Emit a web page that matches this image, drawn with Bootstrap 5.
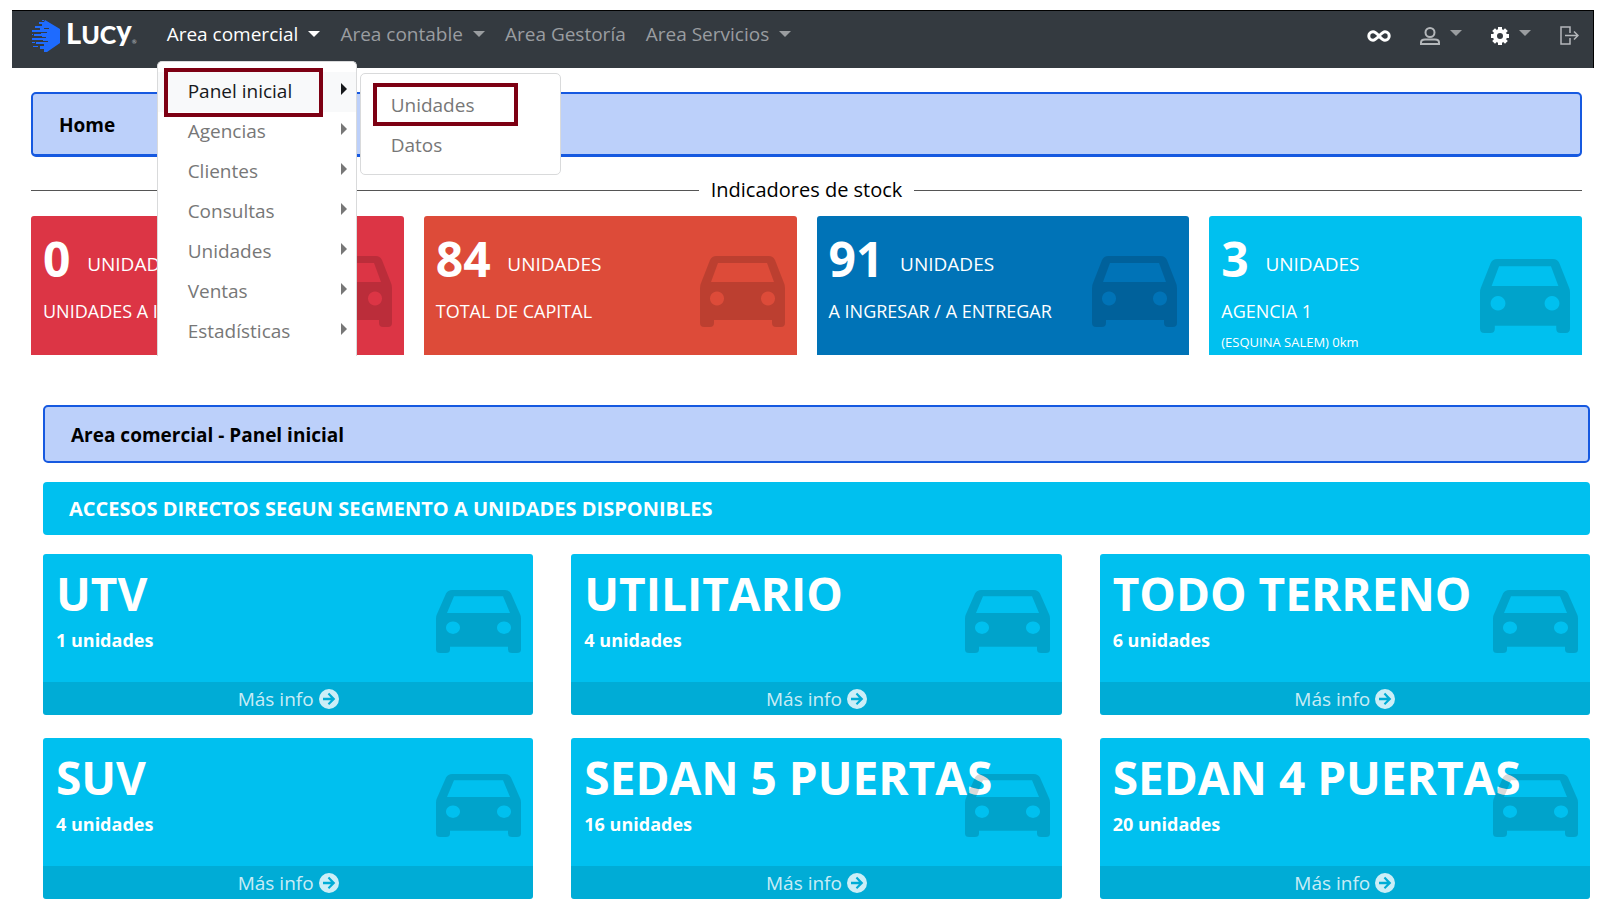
<!DOCTYPE html>
<html lang="es">
<head>
<meta charset="utf-8">
<meta name="viewport" content="width=device-width, initial-scale=1">
<title>Lucy - Panel inicial</title>
<link href="https://cdn.jsdelivr.net/npm/bootstrap@5.3.0/dist/css/bootstrap.min.css" rel="stylesheet">
<style>
  body { font-family: "Open Sans", "Noto Sans", sans-serif; font-size: 18px; line-height: 24px; color: #000; background: #fff; padding: 10px 6px 12px 12px; }
  a { text-decoration: none; }

  /* Top bar */
  .topbar { background: #343a40; border-top: 1px solid #000; border-right: 1px solid #000; height: 58px; padding: 0 14px 8px 20px; }
  .topbar .nav { margin: 0 0 4px 20px; }
  .topbar .nav-link { color: #9a9da0; font-size: 19px; padding: 8px 10px; }
  .topbar .nav-link.active { color: #fff; }
  .topbar .dropdown-toggle::after { margin-left: 10px; vertical-align: 4px; border-width: 6px 6px 0; }
  .wordmark { font-family: Lato, sans-serif; font-weight: 900; font-size: 25px; line-height: 28px; color: #fff; white-space: nowrap; margin-left: 6px; }
  .wordmark .initial { font-size: 29px; }
  .wordmark .tail { font-size: 29px; vertical-align: 3px; }
  .wordmark small { font-size: 6px; color: #9a9da0; }
  .tools { gap: 29px; }
  .tools button { background: none; border: 0; padding: 0; color: #fff; display: flex; align-items: center; gap: 10px; }
  .tools .soft { color: #b4b7ba; }
  .tools .dropdown-toggle::after { color: #9a9da0; margin: 0 0 6px 0; }

  /* Menus */
  .menu, .submenu { background: #fff; border: 1px solid #d9dadb; border-radius: 5px; padding: 10px 0; list-style: none; margin: 0; position: absolute; }
  .menu { top: 100%; left: 0; width: 200px; z-index: 20; border-bottom: 0; border-radius: 5px 5px 0 0; margin-top: 7px; padding-bottom: 4px; }
  .submenu { top: 11px; left: 202px; width: 201px; }
  .menu a { display: flex; align-items: center; justify-content: space-between; height: 40px; padding: 0 9px 1px 30px; color: #777; font-size: 19px; }
  .submenu a { padding: 2px 9px 0 30px; }
  .menu .current { background: #f8f9fa; color: #16181b; }
  .menu .has-sub::after { content: ""; border: 6px solid transparent; border-left-color: currentColor; border-right: 0; margin-bottom: 4px; }
  .marked { position: relative; }
  .marked::before { content: ""; position: absolute; border: 4px solid #7d0013; top: -4px; bottom: -5px; left: 6px; right: 33px; }
  .submenu .marked::before { left: 12px; right: 42px; top: -1px; bottom: -2px; }

  /* Headings */
  .crumb { background: #bcd0fa; border: 2px solid #1659e0; border-radius: 5px; font-weight: 700; font-size: 19px; line-height: 24px; padding: 16px 26px 14px; margin: 0; }
  .home-area { padding: 24px 12px 0 19px; }
  .home-area .crumb { padding: 19px 26px 17px; border-bottom-width: 3px; }
  .divider { gap: 12px; font-size: 20px; margin: 21px 0 14px; }
  .divider::before, .divider::after { content: ""; flex: 1; border-top: 1px solid #555; }
  .strip { background: #00c0ef; color: #fff; border-radius: 4px; font-weight: 700; font-size: 20px; padding: 15px 26px 14px; margin: 19px 0; }

  /* Tiles */
  .tiles { --bs-gutter-x: 20px; }
  .tiles-wide { --bs-gutter-x: 38px; --bs-gutter-y: 23px; }
  .tile { position: relative; color: #fff; border-radius: 3px; height: 100%; overflow: hidden; }
  .tile .car { position: absolute; right: 12px; top: 40px; width: 85px; height: 71px; color: rgba(0,0,0,.15); }
  .stat { min-height: 139px; padding: 16px 12px 0; border-radius: 3px 3px 0 0; }
  .stat .amount { font-weight: 700; font-size: 48px; line-height: 54px; }
  .stat .unit { font-size: 19px; margin-left: 12px; vertical-align: 6px; }
  .stat .what { font-size: 18px; line-height: 24px; margin: 13px 0 0; white-space: nowrap; }
  .stat .where { font-size: 13px; line-height: 18px; margin: 10px 0 0; }
  .stat .car.large { width: 90px; height: 74px; top: 43px; }
  .bg-alert { background: #dc3545; }
  .bg-capital { background: #dd4b39; }
  .bg-transit { background: #0073b7; }
  .bg-agency { background: #00c0ef; }
  .segment { display: flex; flex-direction: column; min-height: 161px; }
  .segment .inner { padding: 12px 13px; flex: 1; }
  .segment h2 { font-size: 46px; line-height: 54px; font-weight: 700; margin: 0 0 8px; white-space: nowrap; }
  .segment p { font-weight: 700; font-size: 18px; margin: 0; }
  .segment .car { height: 63px; top: 36px; right: 12px; }
  .segment .more { background: rgba(0,0,0,.1); color: rgba(255,255,255,.8); display: flex; justify-content: center; align-items: center; gap: 5px; height: 33px; font-size: 19px; }
  .panel-area { padding: 50px 4px 0 31px; }
</style>
</head>
<body>
<svg class="d-none" aria-hidden="true">
  <symbol id="car" viewBox="0 0 85 71" preserveAspectRatio="none">
    <path fill="currentColor" fill-rule="evenodd" d="M16 0H69Q73 0 75 4L84 27Q85 29 85 32V67Q85 71 81 71H76Q72 71 72 67V64H14V67Q14 71 10 71H4Q0 71 0 67V32Q0 29 1 27L10 4Q12 0 16 0ZM18 7L11 26H74L67 7ZM17 35.500a7 7 0 1 0 .01 0ZM68 35.500a7 7 0 1 0 .01 0Z"/>
  </symbol>
  <symbol id="go" viewBox="0 0 20 20">
    <path fill="currentColor" fill-rule="evenodd" d="M10 0a10 10 0 1 1 0 20a10 10 0 0 1 0-20ZM10.200 3.800L8.700 5.300L11.900 8.700H4V11.200H11.900L8.700 14.600L10.200 16.100L16.300 10Z"/>
  </symbol>
</svg>

<nav class="topbar d-flex align-items-center">
  <a href="#" class="d-flex align-items-center" aria-label="Lucy">
    <svg width="28" height="32" viewBox="0 0 28 32" fill="#1e6bff">
      <path d="M13 0L28 9V23L15 32H12L12 29H8V26H12V24H4V22H11V20H0V18H10V16H2V14H9V12H0V10H8V8H3V6H10V4H7V2H12Z"/>
      <path d="M0 14H1V15H0ZM0 22H3V23H0ZM1 26H6V27H1ZM10 0H12V1H10Z"/>
      <path d="M9 12H15V13H9ZM6 21H16V22H6ZM12 8H17V9H12ZM10 17H14V18H10Z" fill="#343a40"/>
    </svg>
    <span class="wordmark"><span class="initial">L</span>UC<span class="tail">y</span><small>®</small></span>
  </a>
  <ul class="nav flex-nowrap">
    <li class="nav-item position-relative">
      <a class="nav-link active dropdown-toggle" href="#">Area comercial</a>
      <ul class="menu">
        <li>
          <a class="has-sub current marked" href="#">Panel inicial</a>
          <ul class="submenu">
            <li><a class="marked" href="#">Unidades</a></li>
            <li><a href="#">Datos</a></li>
          </ul>
        </li>
        <li><a class="has-sub" href="#">Agencias</a></li>
        <li><a class="has-sub" href="#">Clientes</a></li>
        <li><a class="has-sub" href="#">Consultas</a></li>
        <li><a class="has-sub" href="#">Unidades</a></li>
        <li><a class="has-sub" href="#">Ventas</a></li>
        <li><a class="has-sub" href="#">Estadísticas</a></li>
      </ul>
    </li>
    <li class="nav-item"><a class="nav-link dropdown-toggle" href="#">Area contable</a></li>
    <li class="nav-item"><a class="nav-link" href="#">Area Gestoría</a></li>
    <li class="nav-item"><a class="nav-link dropdown-toggle" href="#">Area Servicios</a></li>
  </ul>
  <div class="tools d-flex align-items-center ms-auto">
    <button type="button" aria-label="Accesos">
      <svg width="24" height="12" viewBox="0 0 24 12" fill="none" stroke="currentColor" stroke-width="3"><path d="M12 6C9.500 3 8 1.800 6 1.800A4.200 4.200 0 0 0 6 10.200C10 10.200 14 1.800 18 1.800A4.200 4.200 0 0 1 18 10.200C16 10.200 14.500 9 12 6Z"/></svg>
    </button>
    <button type="button" class="dropdown-toggle soft" aria-label="Usuario">
      <svg width="20" height="18" viewBox="0 0 20 18" fill="none" stroke="currentColor" stroke-width="2"><circle cx="10" cy="5.500" r="4.500"/><path d="M1 17V15.500Q1 12.500 5 12.500H15Q19 12.500 19 15.500V17Z"/></svg>
    </button>
    <button type="button" class="dropdown-toggle" aria-label="Configuración">
      <svg width="18" height="18" viewBox="0 0 18 18"><g fill="currentColor"><path fill-rule="evenodd" d="M9 2a7 7 0 1 1 0 14a7 7 0 0 1 0-14ZM9 6a3 3 0 1 0 0 6a3 3 0 0 0 0-6Z"/><path d="M7 0H11V3H7ZM7 15H11V18H7ZM0 7H3V11H0ZM15 7H18V11H15Z"/><path d="M1.200 4L4 1.200L6 3.200L3.200 6ZM12 3.200L14 1.200L16.800 4L14.800 6ZM1.200 14L3.200 12L6 14.800L4 16.800ZM12 14.800L14.800 12L16.800 14L14 16.800Z"/></g></svg>
    </button>
    <button type="button" class="soft" aria-label="Salir">
      <svg width="19" height="19" viewBox="0 0 19 19" fill="none" stroke="currentColor" stroke-width="1.500"><path d="M10 7V1H1V18H10V12M5 9.500H18M14 5.500L18 9.500L14 13.500"/></svg>
    </button>
  </div>
</nav>

<main>
  <section class="home-area">
    <h1 class="crumb">Home</h1>
    <div class="divider d-flex align-items-center">Indicadores de stock</div>
    <div class="row tiles">
      <div class="col-3"><div class="tile stat bg-alert">
        <div><span class="amount">0</span> <span class="unit">UNIDAD</span></div>
        <p class="what">UNIDADES A I</p>
        <svg class="car"><use href="#car"/></svg>
      </div></div>
      <div class="col-3"><div class="tile stat bg-capital">
        <div><span class="amount">84</span> <span class="unit">UNIDADES</span></div>
        <p class="what">TOTAL DE CAPITAL</p>
        <svg class="car"><use href="#car"/></svg>
      </div></div>
      <div class="col-3"><div class="tile stat bg-transit">
        <div><span class="amount">91</span> <span class="unit">UNIDADES</span></div>
        <p class="what">A INGRESAR / A ENTREGAR</p>
        <svg class="car"><use href="#car"/></svg>
      </div></div>
      <div class="col-3"><div class="tile stat bg-agency">
        <div><span class="amount">3</span> <span class="unit">UNIDADES</span></div>
        <p class="what">AGENCIA 1</p>
        <p class="where">(ESQUINA SALEM) 0km</p>
        <svg class="car large"><use href="#car"/></svg>
      </div></div>
    </div>
  </section>

  <section class="panel-area">
    <h1 class="crumb">Area comercial - Panel inicial</h1>
    <div class="strip">ACCESOS DIRECTOS SEGUN SEGMENTO A UNIDADES DISPONIBLES</div>
    <div class="row tiles-wide">
      <div class="col-4"><div class="tile segment bg-agency">
        <div class="inner"><h2>UTV</h2><p>1 unidades</p></div>
        <svg class="car"><use href="#car"/></svg>
        <a class="more" href="#">Más info <svg width="20" height="20"><use href="#go"/></svg></a>
      </div></div>
      <div class="col-4"><div class="tile segment bg-agency">
        <div class="inner"><h2>UTILITARIO</h2><p>4 unidades</p></div>
        <svg class="car"><use href="#car"/></svg>
        <a class="more" href="#">Más info <svg width="20" height="20"><use href="#go"/></svg></a>
      </div></div>
      <div class="col-4"><div class="tile segment bg-agency">
        <div class="inner"><h2>TODO TERRENO</h2><p>6 unidades</p></div>
        <svg class="car"><use href="#car"/></svg>
        <a class="more" href="#">Más info <svg width="20" height="20"><use href="#go"/></svg></a>
      </div></div>
      <div class="col-4"><div class="tile segment bg-agency">
        <div class="inner"><h2>SUV</h2><p>4 unidades</p></div>
        <svg class="car"><use href="#car"/></svg>
        <a class="more" href="#">Más info <svg width="20" height="20"><use href="#go"/></svg></a>
      </div></div>
      <div class="col-4"><div class="tile segment bg-agency">
        <div class="inner"><h2>SEDAN 5 PUERTAS</h2><p>16 unidades</p></div>
        <svg class="car"><use href="#car"/></svg>
        <a class="more" href="#">Más info <svg width="20" height="20"><use href="#go"/></svg></a>
      </div></div>
      <div class="col-4"><div class="tile segment bg-agency">
        <div class="inner"><h2>SEDAN 4 PUERTAS</h2><p>20 unidades</p></div>
        <svg class="car"><use href="#car"/></svg>
        <a class="more" href="#">Más info <svg width="20" height="20"><use href="#go"/></svg></a>
      </div></div>
    </div>
  </section>
</main>
<script src="https://cdn.jsdelivr.net/npm/bootstrap@5.3.0/dist/js/bootstrap.bundle.min.js"></script>
</body>
</html>
